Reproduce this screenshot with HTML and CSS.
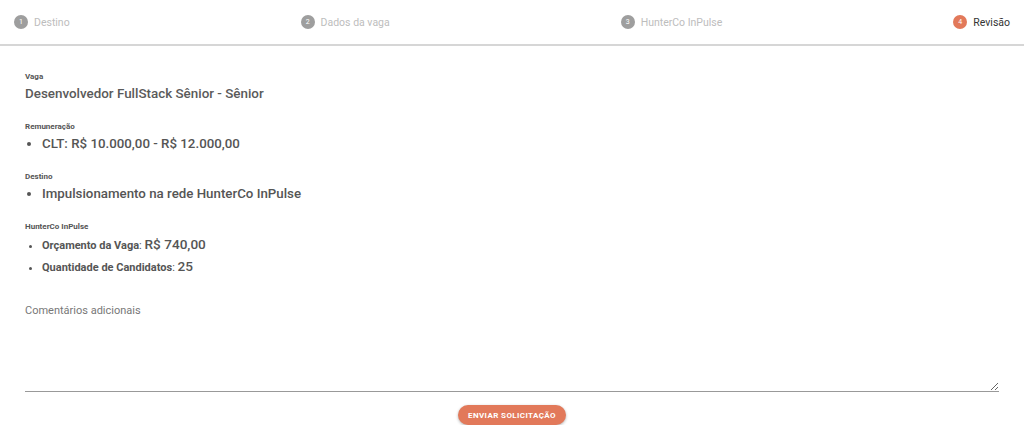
FILE: index.html
```html
<!DOCTYPE html>
<html lang="pt-BR">
<head>
    <meta charset="UTF-8">
    <title>Revisão</title>
    <link rel="stylesheet" href="styles.css">
</head>
<body>
<header class="stepper">
    <div class="step">
        <span class="step-num">1</span>
        <span class="step-label">Destino</span>
    </div>
    <div class="step">
        <span class="step-num">2</span>
        <span class="step-label">Dados da vaga</span>
    </div>
    <div class="step">
        <span class="step-num">3</span>
        <span class="step-label">HunterCo InPulse</span>
    </div>
    <div class="step active">
        <span class="step-num">4</span>
        <span class="step-label">Revisão</span>
    </div>
</header>
<main class="review">
    <section class="field">
        <div class="field-label">Vaga</div>
        <div class="field-value">Desenvolvedor FullStack Sênior - Sênior</div>
    </section>
    <section class="field">
        <div class="field-label">Remuneração</div>
        <ul class="field-list">
            <li>CLT: R$ 10.000,00 - R$ 12.000,00</li>
        </ul>
    </section>
    <section class="field">
        <div class="field-label">Destino</div>
        <ul class="field-list">
            <li>Impulsionamento na rede HunterCo InPulse</li>
        </ul>
    </section>
    <section class="field">
        <div class="field-label">HunterCo InPulse</div>
        <ul class="sub-list">
            <li><b>Orçamento da Vaga</b>: <span>R$ 740,00</span></li>
            <li><b>Quantidade de Candidatos</b>: <span>25</span></li>
        </ul>
    </section>
    <div class="comments">
        <label for="comments">Comentários adicionais</label>
        <textarea id="comments" name="comments"></textarea>
    </div>
    <div class="actions">
        <button type="button" class="send">Enviar solicitação</button>
    </div>
</main>
</body>
</html>
```

FILE: styles.css
```css
body {
    margin: 0;
    font-family: Roboto, "Liberation Sans", sans-serif;
    background-color: #fff;
    color: #555;
}
.stepper {
    display: flex;
    justify-content: space-between;
    align-items: center;
    height: 44px;
    padding: 0 14px;
    border-bottom: 2px solid #d6d6d6;
}
.step {
    display: flex;
    align-items: center;
    gap: 6px;
    font-size: 10.5px;
    color: #bdbdbd;
}
.step-num {
    display: flex;
    align-items: center;
    justify-content: center;
    width: 14px;
    height: 14px;
    border-radius: 50%;
    background-color: #9e9e9e;
    color: #fff;
    font-size: 7px;
}
.step.active {
    color: #333;
}
.step.active .step-num {
    background-color: #e2795a;
}
.review {
    padding: 26px 25px 0;
}
.field {
    margin-bottom: 18px;
}
.field-label {
    font-size: 8px;
    line-height: 10px;
    font-weight: bold;
    color: #555;
    margin-bottom: 2px;
}
.field-value {
    font-size: 13.4px;
    line-height: 20px;
    font-weight: 500;
    color: #5a5a5a;
}
.field-list {
    margin: 0;
    padding-left: 17px;
}
.field-list li {
    font-size: 13.3px;
    line-height: 20px;
    font-weight: 500;
}
.sub-list {
    margin: 0;
    padding-left: 17px;
}
.sub-list li {
    font-size: 11px;
    line-height: 21px;
}
.sub-list b {
    font-weight: bold;
    color: #555;
}
.sub-list span {
    font-size: 13.6px;
    font-weight: 500;
}
.comments {
    margin-top: 26px;
    display: flex;
    flex-direction: column;
}
.comments label {
    font-size: 11px;
    color: #777;
    margin-bottom: 4px;
}
.comments textarea {
    height: 70px;
    border: none;
    border-bottom: 1px solid #999;
    outline: none;
    font-family: inherit;
    padding: 0;
}
.actions {
    display: flex;
    justify-content: center;
    padding-top: 13px;
}
.send {
    background-color: #e2795a;
    color: #fff;
    border: none;
    border-radius: 10px;
    height: 20px;
    padding: 0 10px;
    font-family: inherit;
    font-size: 8px;
    font-weight: bold;
    letter-spacing: 0.4px;
    text-transform: uppercase;
    box-shadow: 0 1px 3px rgba(0, 0, 0, 0.3);
    cursor: pointer;
}
```
